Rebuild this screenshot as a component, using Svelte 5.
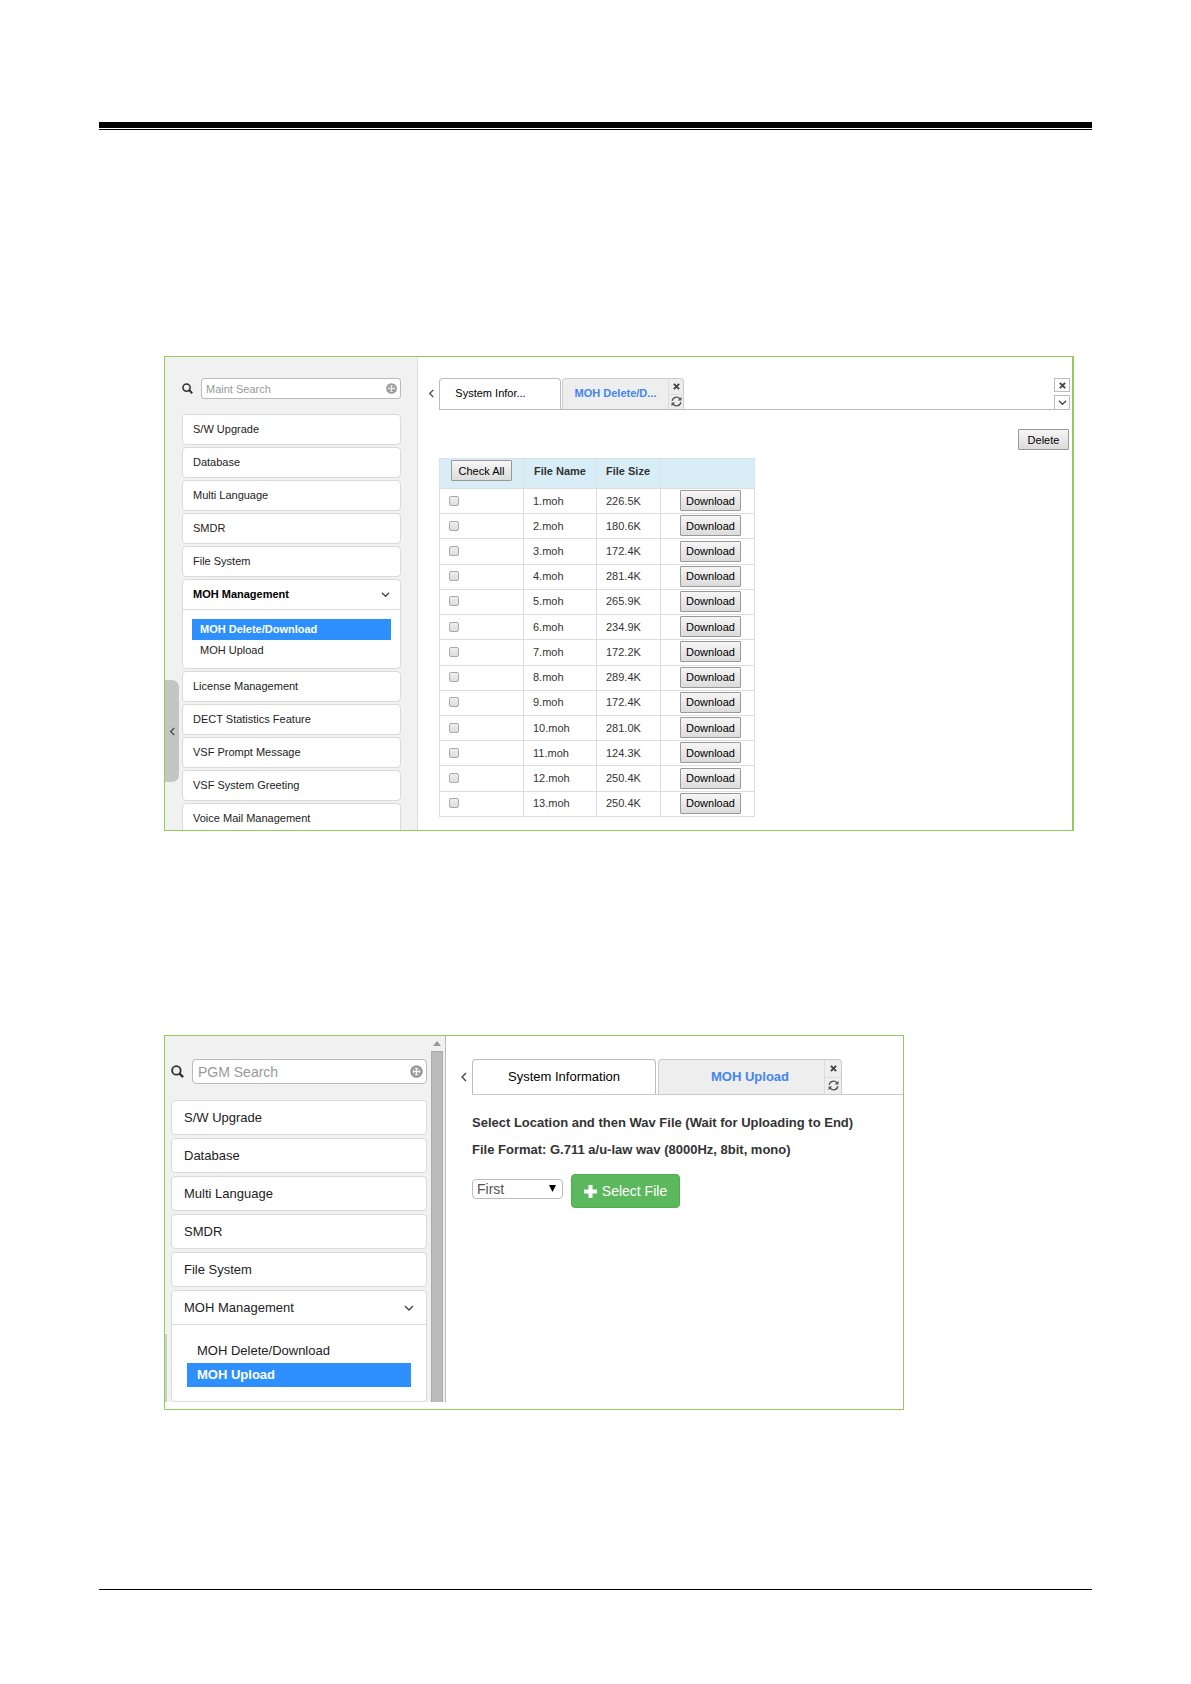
<script>
	const maintMenu = [
		{ name: 'S/W Upgrade' },
		{ name: 'Database' },
		{ name: 'Multi Language' },
		{ name: 'SMDR' },
		{ name: 'File System' },
		{ name: 'MOH Management', bold: true, children: ['MOH Delete/Download', 'MOH Upload'] },
		{ name: 'License Management' },
		{ name: 'DECT Statistics Feature' },
		{ name: 'VSF Prompt Message' },
		{ name: 'VSF System Greeting' },
		{ name: 'Voice Mail Management' }
	];

	const pgmMenu = [
		{ name: 'S/W Upgrade' },
		{ name: 'Database' },
		{ name: 'Multi Language' },
		{ name: 'SMDR' },
		{ name: 'File System' },
		{ name: 'MOH Management', children: ['MOH Delete/Download', 'MOH Upload'] }
	];

	const sizes = [
		'226.5K', '180.6K', '172.4K', '281.4K', '265.9K', '234.9K', '172.2K',
		'289.4K', '172.4K', '281.0K', '124.3K', '250.4K', '250.4K'
	];

	let files = $state(
		sizes.map((size, i) => ({ name: `${i + 1}.moh`, size, checked: false }))
	);
	let location = $state('First');

	function checkAll() {
		const all = files.every((file) => file.checked);
		files.forEach((file) => (file.checked = !all));
	}
</script>

{#snippet chevron(dir)}
	<svg class="chevron {dir}" viewBox="0 0 10 10" aria-hidden="true">
		<path d="M1 3l4 4 4-4" fill="none" stroke="currentColor" stroke-width="1.4" />
	</svg>
{/snippet}

{#snippet cross()}
	<svg class="cross" viewBox="0 0 8 8" aria-hidden="true">
		<path d="M1 1l6 6M7 1l-6 6" stroke="currentColor" stroke-width="2.2" />
	</svg>
{/snippet}

{#snippet refresh()}
	<svg class="refresh" viewBox="0 0 12 12" aria-hidden="true">
		<g fill="none" stroke="currentColor" stroke-width="1.5">
			<path d="M1.3 5.4a4.7 4.7 0 0 1 8.4-2.3" />
			<path d="M10.7 6.6a4.7 4.7 0 0 1-8.4 2.3" />
		</g>
		<path d="M11.4 0.8v4.1H7.5zM0.6 11.2V7.1h3.9z" fill="currentColor" />
	</svg>
{/snippet}

{#snippet search(id, label)}
	<div class="search">
		<label for={id} aria-label={label}>
			<svg viewBox="0 0 14 14" aria-hidden="true">
				<circle cx="5.8" cy="5.8" r="4.6" fill="none" stroke="#333" stroke-width="2" />
				<path d="M9 9l4 4" stroke="#333" stroke-width="2.6" />
			</svg>
		</label>
		<div class="search-box">
			<input {id} type="text" placeholder={label} />
			<button class="clear" type="button" aria-label="Clear">
				<svg viewBox="0 0 14 14" aria-hidden="true">
					<circle cx="7" cy="7" r="5.4" fill="none" stroke="#999" stroke-width="2.8" />
					<path d="M4 4l2 2M10 4l-2 2M4 10l2-2M10 10l-2-2" stroke="#999" stroke-width="2.4" />
				</svg>
			</button>
		</div>
	</div>
{/snippet}

{#snippet menu(items, active)}
	<ul class="menu">
		{#each items as item}
			<li>
				<a class="item" class:bold={item.bold} href="#menu">
					{item.name}
					{#if item.children}{@render chevron('down')}{/if}
				</a>
				{#if item.children}
					<ul class="submenu">
						{#each item.children as child}
							<li><a class:active={child === active} href="#submenu">{child}</a></li>
						{/each}
					</ul>
				{/if}
			</li>
		{/each}
	</ul>
{/snippet}

{#snippet tabs(first, second)}
	<button class="prev" type="button" aria-label="Previous tab">{@render chevron('left')}</button>
	<button class="tab" type="button">{first}</button>
	<div class="tab current">
		<button class="tab-name" type="button">{second}</button>
		<div class="tab-tools">
			<button type="button" aria-label="Close tab">{@render cross()}</button>
			<button type="button" aria-label="Reload tab">{@render refresh()}</button>
		</div>
	</div>
{/snippet}

<div class="page">
	<header></header>

	<section class="panel maint">
		<aside>
			{@render search('maint-search', 'Maint Search')}
			{@render menu(maintMenu, 'MOH Delete/Download')}
			<button class="handle" type="button" aria-label="Collapse">{@render chevron('left')}</button>
		</aside>
		<div class="content">
			<div class="tabs">
				{@render tabs('System Infor...', 'MOH Delete/D...')}
				<div class="window-tools">
					<button type="button" aria-label="Close all">{@render cross()}</button>
					<button type="button" aria-label="Tab list">{@render chevron('down')}</button>
				</div>
			</div>
			<div class="actions">
				<button class="btn-gray" type="button">Delete</button>
			</div>
			<table>
				<thead>
					<tr>
						<th class="col-check">
							<button class="btn-gray" type="button" onclick={checkAll}>Check All</button>
						</th>
						<th class="col-name">File Name</th>
						<th class="col-size">File Size</th>
						<th></th>
					</tr>
				</thead>
				<tbody>
					{#each files as file}
						<tr>
							<td class="check"><input type="checkbox" aria-label={file.name} bind:checked={file.checked} /></td>
							<td>{file.name}</td>
							<td>{file.size}</td>
							<td class="download"><button class="btn-gray" type="button">Download</button></td>
						</tr>
					{/each}
				</tbody>
			</table>
		</div>
	</section>

	<section class="panel pgm">
		<aside>
			<div class="side-main">
				{@render search('pgm-search', 'PGM Search')}
				{@render menu(pgmMenu, 'MOH Upload')}
			</div>
			<div class="scrollbar">
				<svg viewBox="0 0 8 5" aria-hidden="true"><path d="M0 5l4-5 4 5z" fill="#999" /></svg>
				<div class="thumb"></div>
			</div>
			<div class="edge"></div>
		</aside>
		<div class="content">
			<div class="tabs">
				{@render tabs('System Information', 'MOH Upload')}
			</div>
			<div class="upload">
				<p>Select Location and then Wav File (Wait for Uploading to End)</p>
				<p>File Format: G.711 a/u-law wav (8000Hz, 8bit, mono)</p>
				<div class="upload-row">
					<div class="select">
						<select aria-label="Location" bind:value={location}>
							<option>First</option>
							<option>Second</option>
						</select>
						<svg viewBox="0 0 7 7" aria-hidden="true"><path d="M0 0h7l-3.5 7z" /></svg>
					</div>
					<button class="btn-green" type="button">
						<svg viewBox="0 0 13 13" aria-hidden="true">
							<path d="M4.5 0h4v4.5H13v4H8.5V13h-4V8.5H0v-4h4.5z" fill="#fff" />
						</svg>
						Select File
					</button>
				</div>
			</div>
		</div>
	</section>

	<footer></footer>
</div>

<style>
	:global(body) {
		background: #fff;
	}

	.page, .page * {
		box-sizing: border-box;
	}

	.page {
		padding: 122px 99px 94px;
		font-family: 'Liberation Sans', Arial, sans-serif;
		font-size: 11px;
		color: #222;
	}

	header {
		height: 8px;
		border-top: 6px solid #000;
		border-bottom: 1px solid #000;
	}

	footer {
		margin-top: 179px;
		border-top: 1px solid #000;
	}

	button, input, select {
		font: inherit;
		color: inherit;
		margin: 0;
	}

	button {
		padding: 0;
		border: 0;
		background: none;
	}

	a {
		color: inherit;
		text-decoration: none;
	}

	ul {
		list-style: none;
		margin: 0;
		padding: 0;
	}

	svg {
		display: block;
		flex: none;
	}

	.panel {
		display: flex;
		overflow: hidden;
		border: 1px solid #92cd5c;
		margin-left: 65px;
	}

	.maint {
		height: 475px;
		margin-top: 226px;
		margin-right: 18px;
		border-right-width: 2px;
	}

	.pgm {
		max-width: 740px;
		height: 375px;
		margin-top: 204px;
		padding-bottom: 7px;
		font-size: 13px;
	}

	aside {
		position: relative;
		flex: none;
		background: #f1f1f1;
	}

	.maint aside {
		width: 253px;
		padding: 21px 16px 0 17px;
		border-right: 1px solid #ddd;
	}

	.pgm aside {
		display: flex;
		width: 281px;
		border-right: 1px solid #bbb;
		overflow: hidden;
	}

	.side-main {
		flex: 1;
		padding: 23px 4px 0 6px;
	}

	/* Search */

	.search {
		display: flex;
		align-items: center;
		gap: 8px;
	}

	.search label svg {
		width: 11px;
		height: 11px;
	}

	.pgm .search label svg {
		width: 13px;
		height: 13px;
	}

	.search-box {
		display: flex;
		align-items: center;
		flex: 1;
		height: 21px;
		padding: 0 3px 0 4px;
		background: #fff;
		border: 1px solid #bbb;
		border-radius: 3px;
	}

	.pgm .search-box {
		height: 25px;
		padding-left: 5px;
		border-radius: 4px;
		font-size: 14px;
	}

	.search input {
		flex: 1;
		min-width: 0;
		padding: 0;
		border: 0;
		outline: 0;
		background: none;
	}

	.search input::placeholder {
		color: #999;
		opacity: 1;
	}

	.clear svg {
		width: 11px;
		height: 11px;
	}

	.pgm .clear svg {
		width: 13px;
		height: 13px;
	}

	/* Menu */

	.menu {
		display: flex;
		flex-direction: column;
		gap: 2px;
		margin-top: 15px;
	}

	.pgm .menu {
		gap: 3px;
		margin-top: 16px;
	}

	.menu > li {
		background: #fff;
		border: 1px solid #dadada;
		border-radius: 4px;
	}

	.item {
		display: flex;
		align-items: center;
		justify-content: space-between;
		height: 29px;
		padding: 0 10px 1px;
	}

	.pgm .item {
		height: 33px;
		padding: 0 12px;
	}

	.bold {
		font-weight: bold;
		color: #000;
	}

	.submenu {
		padding: 9px 9px 7px;
		border-top: 1px solid #dadada;
	}

	.submenu a {
		display: block;
		line-height: 21px;
		padding: 0 8px;
	}

	.pgm .submenu {
		padding: 14px 15px;
	}

	.pgm .submenu a {
		line-height: 24px;
		padding: 0 10px;
	}

	.submenu .active {
		background: #2e8fff;
		color: #fff;
		font-weight: bold;
	}

	.handle {
		position: absolute;
		left: 0;
		top: 323px;
		display: flex;
		align-items: center;
		justify-content: center;
		width: 14px;
		height: 102px;
		background: #c5c5c5;
		border-radius: 0 7px 7px 0;
	}

	.scrollbar {
		display: flex;
		flex-direction: column;
		align-items: center;
		width: 12px;
		margin-right: 2px;
	}

	.scrollbar svg {
		width: 8px;
		height: 5px;
		margin: 5px 0;
	}

	.thumb {
		flex: 1;
		width: 100%;
		background: #bbb;
		border: 1px solid #aaa;
		border-bottom: 0;
	}

	/* Sliver of the collapse handle on the left edge */
	.edge {
		position: absolute;
		left: 0;
		bottom: 0;
		width: 2px;
		height: 68px;
		background: #c5d3b8;
	}

	/* Icons */

	.chevron {
		width: 9px;
		height: 9px;
		color: #444;
	}

	.pgm .chevron {
		width: 10px;
		height: 10px;
	}

	.left {
		transform: rotate(90deg);
	}

	.cross {
		width: 7px;
		height: 7px;
		color: #444;
	}

	.refresh {
		width: 11px;
		height: 11px;
		color: #555;
	}

	/* Tabs */

	.content {
		flex: 1;
		min-width: 0;
	}

	.tabs {
		position: relative;
		display: flex;
		height: 32px;
		margin: 21px 2px 0 21px;
		border-bottom: 1px solid #bbb;
	}

	.pgm .tabs {
		height: 36px;
		margin: 23px 0 0 26px;
		border-bottom-color: #ccc;
	}

	.prev {
		position: absolute;
		left: -15px;
		top: 0;
		display: flex;
		align-items: center;
		justify-content: center;
		width: 14px;
		height: 100%;
	}

	.tab {
		width: 122px;
		height: 31px;
		margin-right: 1px;
		padding-bottom: 2px;
		background: #fff;
		border: 1px solid #bbb;
		border-bottom: 0;
		border-radius: 4px 4px 0 0;
		color: #000;
	}

	.maint button.tab {
		padding-right: 19px;
	}

	.pgm .tab {
		width: 184px;
		height: 35px;
		margin-right: 2px;
	}

	.current {
		display: flex;
		padding: 0;
		background: #eee;
		border-color: #ccc;
		color: #4285f4;
		overflow: hidden;
	}

	.tab-name {
		flex: 1;
		padding-bottom: 2px;
		font-weight: bold;
		white-space: nowrap;
	}

	.pgm .tab-name {
		padding-left: 17px;
	}

	.tab-tools {
		display: flex;
		flex-direction: column;
		width: 15px;
		border-left: 1px solid #ddd;
	}

	.pgm .tab-tools {
		width: 17px;
	}

	.tab-tools button {
		flex: 1;
		display: flex;
		align-items: center;
		justify-content: center;
	}

	.tab-tools button + button {
		border-top: 1px solid #ddd;
	}

	.window-tools {
		display: flex;
		flex-direction: column;
		justify-content: space-between;
		margin-left: auto;
	}

	.window-tools button {
		display: flex;
		align-items: center;
		justify-content: center;
		width: 16px;
		height: 14px;
		border: 1px solid #bbb;
	}

	.window-tools button:last-child {
		border-bottom: 0;
	}

	/* Files */

	.actions {
		display: flex;
		justify-content: flex-end;
		padding: 19px 3px 8px;
	}

	.btn-gray {
		width: 61px;
		height: 21px;
		background: linear-gradient(#f6f6f6, #dcdcdc);
		border: 1px solid #999;
		border-radius: 1px;
		color: #000;
		font-weight: normal;
	}

	.actions .btn-gray {
		width: 51px;
	}

	table {
		width: 316px;
		height: 359px;
		margin-left: 21px;
		border-collapse: collapse;
		table-layout: fixed;
	}

	th, td {
		padding: 0 0 0 9px;
		text-align: left;
		border: 1px solid #ddd;
		color: #333;
	}

	th {
		height: 30px;
		padding-bottom: 6px;
		background: #d9edf7;
		border-color: #d3e6f0;
		border-bottom-color: #ddd;
	}

	th.col-check {
		width: 84px;
		padding-left: 11px;
	}

	.col-check .btn-gray {
		display: block;
	}

	.col-name {
		width: 73px;
		padding-left: 10px;
	}

	.col-size {
		width: 64px;
	}

	td {
		padding-bottom: 1px;
	}

	td button, td input {
		display: block;
	}

	.download {
		padding-left: 19px;
	}

	td input {
		appearance: none;
		width: 10px;
		height: 10px;
		background: linear-gradient(#eee, #ddd);
		border: 1px solid #aaa;
		border-radius: 2px;
	}

	td input:checked {
		background: #555;
	}

	/* Upload */

	.upload {
		padding: 18px 26px 0;
	}

	.upload p {
		margin: 0 0 7px;
		line-height: 20px;
		font-weight: bold;
		color: #333;
	}

	.upload-row {
		display: flex;
		align-items: flex-start;
		gap: 8px;
		margin-top: 14px;
		font-size: 14px;
	}

	.select {
		position: relative;
		margin-top: 5px;
	}

	.select select {
		display: block;
		appearance: none;
		width: 91px;
		height: 20px;
		padding: 0 4px;
		background: #fff;
		border: 1px solid #bbb;
		border-radius: 4px;
		color: #555;
	}

	.select svg {
		position: absolute;
		right: 7px;
		top: 6px;
		width: 7px;
		height: 7px;
		pointer-events: none;
	}

	.btn-green {
		display: flex;
		align-items: center;
		justify-content: center;
		gap: 5px;
		width: 109px;
		height: 34px;
		background: #5cb85c;
		border: 1px solid #4cae4c;
		border-radius: 4px;
		color: #fff;
	}

	.btn-green svg {
		width: 13px;
		height: 13px;
	}
</style>
